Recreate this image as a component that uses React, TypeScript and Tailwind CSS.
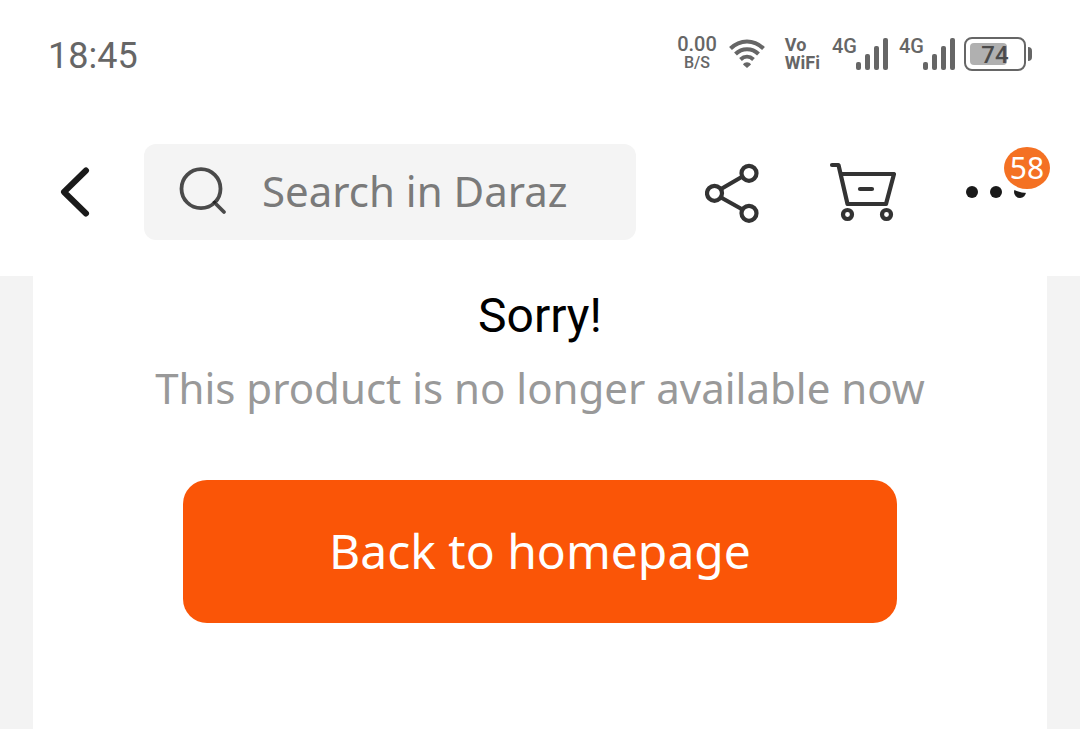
import { useState } from 'react';

const CART_COUNT = 58;
const BATTERY_LEVEL = 74;

// --- ICONS ---
function WifiIcon() {
  return (
    <svg width="36" height="30" viewBox="0 0 36 30" fill="none" stroke="#666666" strokeWidth="4" aria-hidden="true">
      <path d="M1.5 9.5C11 0 25 0 34.500 9.500" />
      <path d="M6.500 15C13 8.500 23 8.500 29.500 15" />
      <path d="M11.500 20.500C15.500 16.800 20.500 16.800 24.500 20.500" />
      <path d="M18 29L14 25.500C15.500 22.500 20.500 22.500 22 25.500Z" fill="#666666" stroke="none" />
    </svg>
  );
}

function SignalBars() {
  return (
    <svg width="33" height="32" viewBox="0 0 33 32" fill="#666666" aria-hidden="true">
      <rect x="0" y="24" width="5" height="8" rx="2" />
      <rect x="9" y="16" width="5" height="16" rx="2" />
      <rect x="18" y="8" width="5" height="24" rx="2" />
      <rect x="27" y="0" width="5" height="32" rx="2" />
    </svg>
  );
}

function BackIcon() {
  return (
    <svg width="30" height="50" viewBox="0 0 30 50" fill="none" stroke="#1a1a1a" strokeWidth="6" strokeLinecap="round" strokeLinejoin="round" aria-hidden="true">
      <path d="M26 3.500L4 25L26 46.500" />
    </svg>
  );
}

function SearchIcon() {
  return (
    <svg className="shrink-0 overflow-visible" width="48" height="48" viewBox="0 0 48 48" fill="none" stroke="#4a4a4a" strokeWidth="3.800" strokeLinecap="round" aria-hidden="true">
      <circle cx="22" cy="20.700" r="19.500" />
      <path d="M35.500 34.500L45 44" />
      <circle cx="35.500" cy="34.300" r="1.200" fill="#222222" stroke="#222222" strokeWidth="1" />
    </svg>
  );
}

function ShareIcon() {
  return (
    <svg width="54" height="62" viewBox="0 0 54 62" fill="none" stroke="#333333" strokeWidth="4.200" aria-hidden="true">
      <circle cx="9.500" cy="32.300" r="7.500" />
      <circle cx="44" cy="12.300" r="7.500" />
      <circle cx="44" cy="52.300" r="7.500" />
      <path d="M16 28L37.500 15.500M16 36.500L37.500 48.500" />
    </svg>
  );
}

function CartIcon() {
  return (
    <svg width="68" height="60" viewBox="0 0 68 60" fill="none" stroke="#333333" strokeWidth="4.200" strokeLinecap="round" strokeLinejoin="round" aria-hidden="true">
      <path d="M3 3H9.500L18.500 42H57L65 12H11.500" />
      <path d="M31 27H43" />
      <circle cx="18.500" cy="52.500" r="4.500" />
      <circle cx="57.500" cy="52.500" r="4.500" />
    </svg>
  );
}

function DotsIcon() {
  return (
    <svg width="60" height="12" viewBox="0 0 60 12" fill="#1a1a1a" aria-hidden="true">
      <circle cx="6" cy="6" r="6" />
      <circle cx="30" cy="6" r="6" />
      <circle cx="54" cy="6" r="6" />
    </svg>
  );
}

// --- STATUS BAR ---
function CellSignal() {
  return (
    <div className="flex h-8 items-end">
      <span className="w-6 self-start text-[20px] leading-4 font-medium">4G</span>
      <SignalBars />
    </div>
  );
}

function StatusBar() {
  return (
    <div className="flex h-27 items-center justify-between pr-12 pl-12 font-[Roboto,sans-serif] text-[#666666]">
      <time className="pt-1 text-[36px]">18:45</time>
      <div className="flex items-center font-medium">
        <div className="mr-3 pb-0.5 text-center">
          <div className="text-[20px] leading-5">0.00</div>
          <div className="text-[16px] leading-[18px]">B/S</div>
        </div>
        <WifiIcon />
        <p className="mr-3 ml-5 text-[18px] leading-[18px] font-bold">
          Vo<br />WiFi
        </p>
        <div className="mr-2 flex gap-2.5">
          <CellSignal />
          <CellSignal />
        </div>
        <div className="relative h-[34px] w-[62px] rounded-lg border-2 border-[#666666] p-1">
          <div className="h-full rounded-sm bg-[#b0b0b0]" style={{ width: `${BATTERY_LEVEL}%` }} />
          <span className="absolute inset-0 flex items-center justify-center pt-0.5 text-[24px] font-medium text-[#4a4a4a]">
            {BATTERY_LEVEL}
          </span>
        </div>
        <div className="ml-0.5 h-3.5 w-1 rounded-r-sm bg-[#666666]" />
      </div>
    </div>
  );
}

// --- HEADER ---
function Header() {
  const [search, setSearch] = useState('');

  return (
    <header className="flex h-42 items-center pr-[54px] pl-15">
      <button type="button" aria-label="Back"><BackIcon /></button>
      <label className="ml-[54px] flex h-24 min-w-0 flex-1 items-center rounded-xl bg-[#f4f4f4] pr-6 pl-[35px]">
        <SearchIcon />
        <input
          type="text"
          aria-label="Search in Daraz"
          placeholder="Search in Daraz"
          value={search}
          onChange={(e) => setSearch(e.target.value)}
          className="ml-[35px] h-full w-full min-w-0 pb-1 text-[42px] text-[#4a4a4a] outline-none placeholder:text-[#7a7a7a]"
        />
      </label>
      <button type="button" aria-label="Share" className="ml-[69px]"><ShareIcon /></button>
      <button type="button" aria-label="Cart" className="ml-[70px]"><CartIcon /></button>
      <button type="button" aria-label="More" className="relative ml-[69px]">
        <DotsIcon />
        <span className="absolute -top-[39px] left-[38px] flex h-[42px] w-[46px] items-center justify-center rounded-[50%] bg-[#f47123] pb-0.5 text-[30px] text-white ring-4 ring-white">
          {CART_COUNT}
        </span>
      </button>
    </header>
  );
}

export default function App() {
  return (
    <div className="flex min-h-screen flex-col bg-white font-['Noto_Sans',sans-serif]">
      <StatusBar />
      <Header />
      <main className="flex flex-1 flex-col bg-[#f3f3f3] px-[33px]">
        <div className="flex flex-1 flex-col items-center bg-white px-[150px] pt-2 text-center">
          <h1 className="font-[Roboto,sans-serif] text-[48px] leading-16 text-black">Sorry!</h1>
          <p className="-mx-[150px] mt-2 text-[42px] leading-16 text-[#999999]">This product is no longer available now</p>
          <button type="button" className="mt-15 h-[143px] w-full rounded-3xl bg-[#fa5507] pb-0.5 text-[48px] text-white">
            Back to homepage
          </button>
        </div>
      </main>
    </div>
  );
}
